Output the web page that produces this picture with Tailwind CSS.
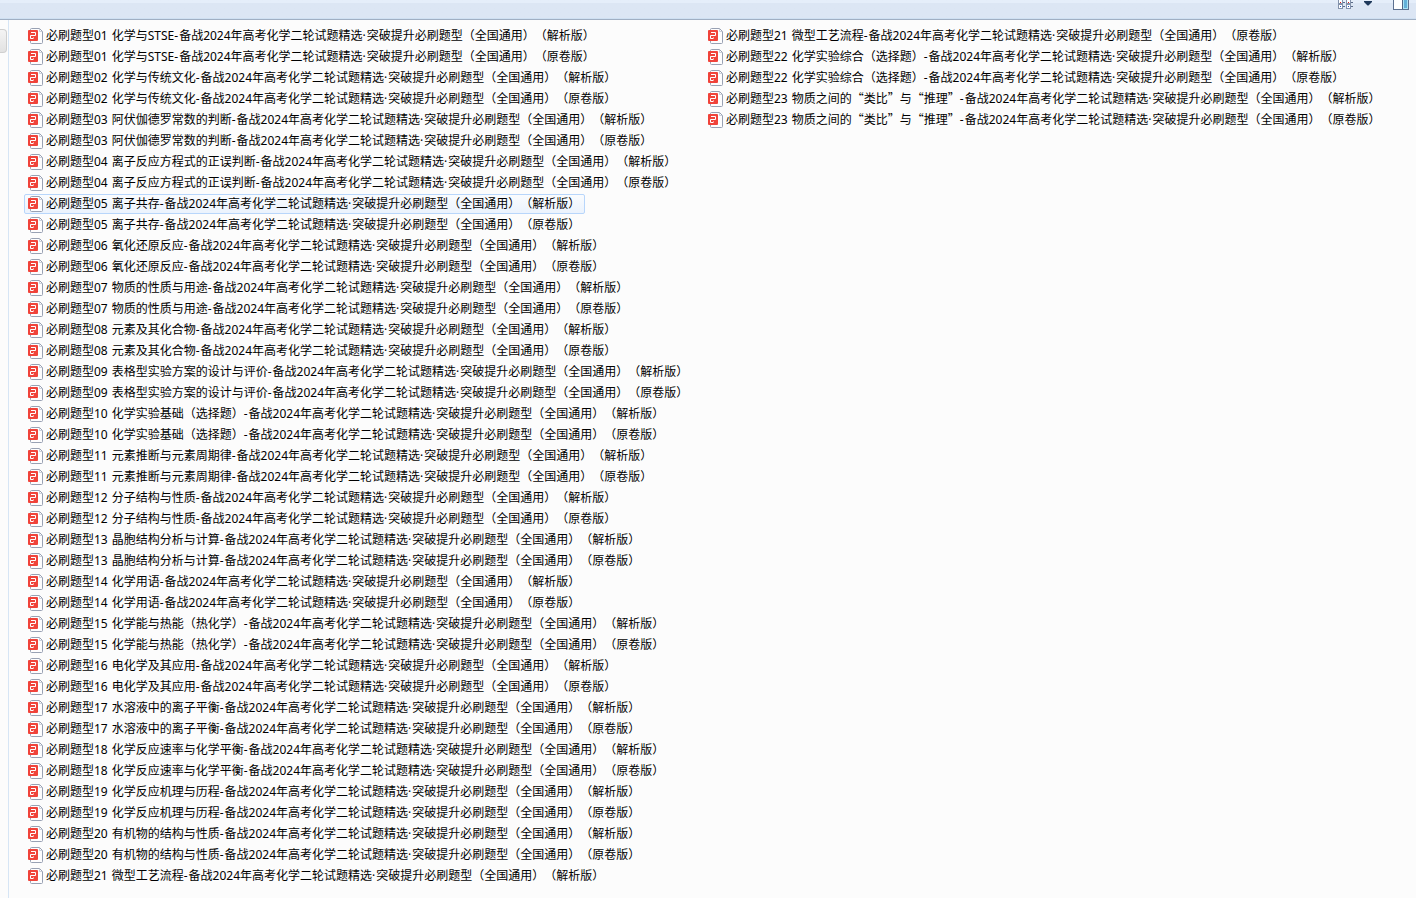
<!DOCTYPE html>
<html lang="zh-CN">
<head>
<meta charset="utf-8">
<title>必刷题型</title>
<script src="https://cdn.jsdelivr.net/npm/@tailwindcss/browser@4"></script>
</head>
<body class="min-h-screen flex flex-col bg-[#fcfcfc] text-black text-xs font-['Noto_Sans','Noto_Sans_CJK_SC',sans-serif] [text-spacing-trim:space-all] overflow-x-hidden">
<svg class="hidden" aria-hidden="true">
  <symbol id="pdf" viewBox="0 0 16 16">
    <path d="M3 .5h8.500l3 3v12H3z" fill="#fdfdfe"/>
    <path d="M2.500 3V1.500q0-1 1-1h8l3 3v11q0 1-1 1h-10q-1 0-1-1V13" fill="none" stroke="#98a1b3"/>
    <path d="M11.500 1v2.500h2.500" fill="none" stroke="#c9cfda"/>
    <rect y="2" width="10" height="11" rx="1" fill="#f0433a"/>
    <path d="M3 4.500H7.500V7.500H2.500V10.500H5.500" fill="none" stroke="#fff" stroke-linejoin="round"/>
    <path d="M5 9h1v1H5z" fill="#fff" fill-opacity=".5"/>
  </symbol>
</svg>
<header class="h-5 shrink-0 flex justify-end items-start gap-[9px] pr-[7px] border-b border-[#a0afc3] shadow-[inset_0_-1px_0_#cfe0f2] bg-linear-to-b from-[#e5eefa] from-15% to-[#dce6f4] to-15%">
  <button class="block" aria-label="更改视图"><svg class="block" width="17" height="10" viewBox="0 0 17 10" shape-rendering="crispEdges">
    <g fill="#fff" stroke="#8492ab"><path d="M.5-.5h4v4h-4zM.5 4.500h4v4h-4zM8.500-.5h4v4h-4zM8.500 4.500h4v4h-4z"/></g>
    <path d="M5 2.500h2M5 6.500h2M13 2.500h2M13 6.500h2" stroke="#5b6b88"/>
    <path d="M2 2h1v1H2zM10 2h1v1h-1z" fill="#d22"/><path d="M2 6h1v1H2zM10 6h1v1h-1z" fill="#25c"/>
  </svg></button>
  <button class="block" aria-label="更多选项"><svg class="block" width="9" height="6" viewBox="0 0 9 6"><path d="M0 1h8v1L4.500 5.500h-1L0 2z" fill="#1e395b"/></svg></button>
  <button class="block ml-[11px]" aria-label="显示预览窗格"><svg class="block" width="16" height="10" viewBox="0 0 16 10" shape-rendering="crispEdges"><path d="M.5-1h15V9.500H.5z" fill="#fff" stroke="#5d7190"/><path d="M10 0h5v9h-5z" fill="#a9e2f3"/><path d="M11 0h3v8h-3z" fill="#62b0d8"/><path d="M9.500 0v9" stroke="#4f6485"/></svg></button>
</header>
<div class="grow flex">
  <aside class="w-[9px] shrink-0 pt-[9px] border-r border-[#d6e5f5]"><div class="w-[7px] h-6 rounded-r-sm border border-l-0 border-[#cfcfcf] bg-linear-to-b from-[#f4f4f4] to-[#e2e2e2]"></div></aside>
  <main class="grow min-w-0 pt-[6px] pl-[15px]">
    <ul id="files" class="grid grid-flow-col grid-rows-[repeat(41,21px)] auto-cols-[680px]"></ul>
  </main>
</div>
<script>
const titles = ['化学与STSE','化学与传统文化','阿伏伽德罗常数的判断','离子反应方程式的正误判断','离子共存','氧化还原反应','物质的性质与用途','元素及其化合物','表格型实验方案的设计与评价','化学实验基础（选择题）','元素推断与元素周期律','分子结构与性质','晶胞结构分析与计算','化学用语','化学能与热能（热化学）','电化学及其应用','水溶液中的离子平衡','化学反应速率与化学平衡','化学反应机理与历程','有机物的结构与性质','微型工艺流程','化学实验综合（选择题）','物质之间的“类比”与“推理”'];
const base = 'h-5 w-max flex items-center pl-[3px] pr-1 border rounded-xs whitespace-nowrap ';
const rows = [];
titles.forEach((t, i) => ['解析版', '原卷版'].forEach(v => {
  const n = String(i + 1).padStart(2, '0');
  const hover = n === '05' && v === '解析版';
  const title = t.replace(/[“”]/g, q => `<span class="leading-none font-['Noto_Sans_CJK_SC',sans-serif]">${q}</span>`);
  rows.push(`<li><a href="#" class="${base}${hover ? 'border-[#b8d6fb] bg-linear-to-b from-[#fafcfe] to-[#ebf3fd]' : 'border-transparent'}"><svg class="size-4 mr-[2px] shrink-0"><use href="#pdf"/></svg><span class="mr-1">必刷题型${n}</span><span class="mr-px">${title}-</span><span class="mr-px">备战2024年高考化学二轮试题精选·</span><span>突破提升必刷题型（全国通用）（${v}）</span></a></li>`);
}));
document.getElementById('files').innerHTML = rows.join('');
</script>
</body>
</html>
